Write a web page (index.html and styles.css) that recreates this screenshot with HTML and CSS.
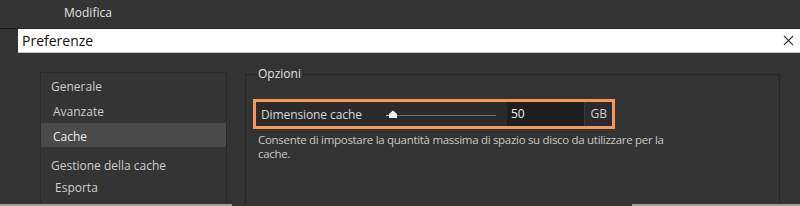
FILE: index.html
```html
<html>
<head>
	<title>Preferenze</title>
	<link rel="stylesheet" href="styles.css">
</head>
<body>
	<div class="menubar">
		<span class="menu-item">Modifica</span>
	</div>

	<div class="titlebar">
		<span class="title">Preferenze</span>
		<svg class="close" width="11" height="11" viewBox="0 0 11 11">
			<line x1="1" y1="1" x2="10" y2="10" stroke="#3a3a3a" stroke-width="1.1"></line>
			<line x1="10" y1="1" x2="1" y2="10" stroke="#3a3a3a" stroke-width="1.1"></line>
		</svg>
	</div>

	<div class="main">
		<div class="nav">
			<div class="nav-item nav-head nav-first">Generale</div>
			<div class="nav-item nav-child nav-second">Avanzate</div>
			<div class="nav-item nav-child selected">Cache</div>
			<div class="nav-item nav-head nav-gap">Gestione della cache</div>
			<div class="nav-item nav-child nav-deep">Esporta</div>
		</div>

		<fieldset class="options">
			<legend>Opzioni</legend>
			<div class="cache-row">
				<span class="cache-label">Dimensione cache</span>
				<div class="slider">
					<svg width="112" height="10" viewBox="0 0 112 10">
						<line x1="0" y1="6.5" x2="110" y2="6.5" stroke="#6e6e6e" stroke-width="1"></line>
						<line x1="0" y1="6.5" x2="6" y2="6.5" stroke="#bdbdbd" stroke-width="1"></line>
						<polygon points="3,9 3,5 7,1.5 11,5 11,9" fill="#f2f2f2"></polygon>
					</svg>
				</div>
				<div class="cache-value">50</div>
				<div class="cache-unit">GB</div>
			</div>
			<div class="description">
				Consente di impostare la quantità massima di spazio su disco da utilizzare per la cache.
			</div>
		</fieldset>
	</div>

	<div class="bottom-line">
		<div class="line-part line-left"></div>
		<div class="line-part line-right"></div>
	</div>
</body>
</html>
```

FILE: styles.css
```css
html {
	margin: 0;
	padding: 0;
}

body {
	margin: 0;
	padding: 0;
	width: 800px;
	height: 206px;
	overflow: hidden;
	background-color: #333333;
	font-family: "Open Sans", "Noto Sans", sans-serif;
	color: #cfcfcf;
}

.menubar {
	height: 28px;
	border-bottom: 1px solid #1e1e1e;
	background-color: #343434;
}

.menu-item {
	display: inline-block;
	padding-left: 64px;
	line-height: 25px;
	font-size: 12px;
	color: #e2e2e2;
}

.titlebar {
	margin-left: 18px;
	height: 23px;
	background-color: #ffffff;
	border-bottom: 1px solid #c4c4c4;
	display: flex;
	align-items: center;
	justify-content: space-between;
	padding: 0 6px 0 4px;
}

.title {
	font-size: 14px;
	color: #111111;
}

.main {
	height: 151px;
	overflow: hidden;
	display: flex;
	align-items: flex-start;
	padding-left: 40px;
	gap: 18px;
	box-sizing: border-box;
	padding-top: 19px;
}

.nav {
	width: 185px;
	height: 200px;
	flex-shrink: 0;
	border: 1px solid #2a2a2a;
	background-color: #343434;
	font-size: 12px;
}

.nav-item {
	height: 24px;
	line-height: 27px;
	color: #cdcdcd;
}

.nav-first,
.nav-second {
	height: 25px;
}

.nav-head {
	padding-left: 10px;
}

.nav-child {
	padding-left: 12px;
}

.nav-deep {
	padding-left: 14px;
	height: 22px;
	line-height: 23px;
}

.nav-gap {
	margin-top: 5px;
}

.selected {
	background-color: #4a4a4a;
	color: #ececec;
}

.options {
	margin: 0;
	margin-top: -6px;
	width: 535px;
	height: 220px;
	box-sizing: border-box;
	border: 1px solid #262626;
	padding: 0 0 0 7px;
	flex-shrink: 0;
}

.options legend {
	font-size: 12px;
	color: #e0e0e0;
	padding: 0 1px;
	margin-left: 4px;
	line-height: 16px;
}

.cache-row {
	margin-top: 17px;
	width: 362px;
	height: 30px;
	box-sizing: border-box;
	border: 3px solid #f5965a;
	background-color: #2b2b2b;
	display: flex;
	align-items: center;
	font-size: 12px;
}

.cache-label {
	padding-left: 5px;
	width: 125px;
	color: #d6d6d6;
	letter-spacing: -0.1px;
}

.slider {
	width: 121px;
	height: 10px;
	display: flex;
	align-items: center;
}

.cache-value {
	width: 73px;
	height: 24px;
	line-height: 24px;
	padding-left: 4px;
	background-color: #1f1f1f;
	color: #f0f0f0;
}

.cache-unit {
	flex: 1;
	height: 24px;
	line-height: 24px;
	text-align: right;
	padding-right: 5px;
	border-left: 1px solid #3a3a3a;
	color: #cfcfcf;
}

.description {
	width: 420px;
	margin-top: 4px;
	padding-left: 5px;
	font-size: 11.5px;
	letter-spacing: -0.3px;
	line-height: 14px;
	color: #c8c8c8;
}

.bottom-line {
	display: flex;
	justify-content: space-between;
	margin-top: 0;
}

.line-part {
	height: 2px;
	background-color: #9c9c9c;
}

.line-left {
	width: 232px;
}

.line-right {
	width: 168px;
}
```
